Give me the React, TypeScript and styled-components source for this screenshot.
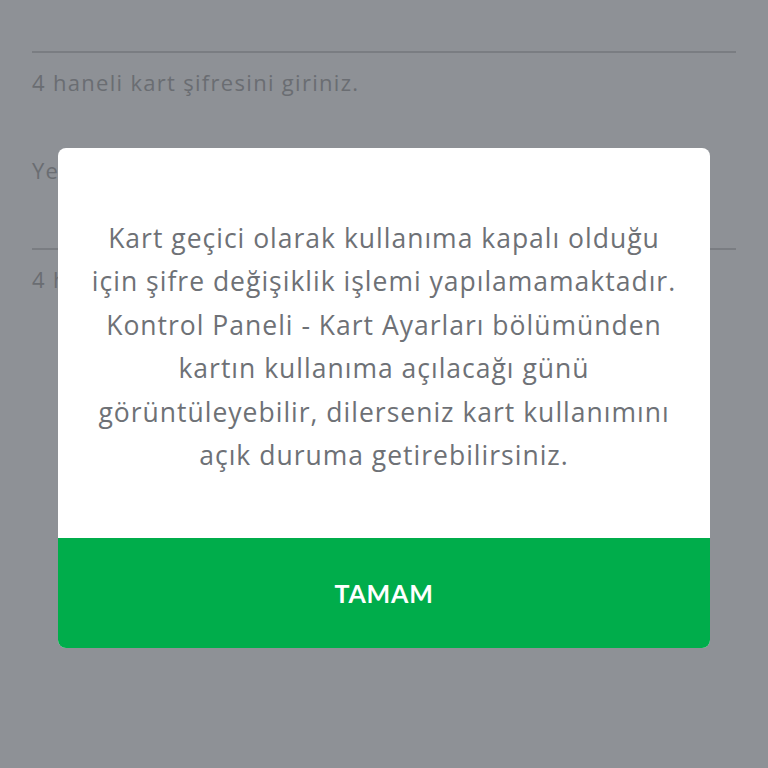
import React from "react";
import styled, { createGlobalStyle } from "styled-components";

const Global = createGlobalStyle`
  html, body { margin: 0; padding: 0; background: #8e9196; }
  body { font-family: "Open Sans", "Noto Sans", sans-serif; }
`;

const Page = styled.div`
  position: relative;
  width: 768px;
  height: 768px;
  overflow: hidden;
  background: #8e9196;
`;

const Form = styled.div`
  display: flex;
  flex-direction: column;
  padding: 0 32px;
`;

const Field = styled.div<{ $top: number; $height: number }>`
  display: flex;
  flex-direction: column;
  margin-top: ${(p) => p.$top}px;
  height: ${(p) => p.$height}px;
  border-bottom: 2px solid #7a7d82;
  justify-content: center;
`;

const Placeholder = styled.div`
  font-size: 22px;
  letter-spacing: 1.2px;
  color: #6a6d72;
  margin-top: -26px;
`;

const Hint = styled.div<{ $top: number }>`
  margin-top: ${(p) => p.$top}px;
  font-size: 22px;
  letter-spacing: 1.3px;
  color: #6a6d72;
  line-height: 30px;
`;

const Overlay = styled.div`
  position: absolute;
  inset: 0;
  display: flex;
  align-items: flex-start;
  justify-content: center;
  padding-top: 148px;
`;

const Dialog = styled.div`
  width: 652px;
  height: 500px;
  background: #ffffff;
  border-radius: 8px;
  overflow: hidden;
  display: flex;
  flex-direction: column;
`;

const Message = styled.div`
  height: 390px;
  box-sizing: border-box;
  padding: 69px 0 0;
  text-align: center;
  font-size: 26.5px;
  letter-spacing: 1px;
  line-height: 43.4px;
  color: #6e7176;
`;

const Button = styled.button`
  flex: 1;
  border: none;
  background: #00ad4b;
  color: #ffffff;
  font-family: Lato, "Noto Sans", sans-serif;
  font-weight: 700;
  font-size: 25px;
  letter-spacing: 0.8px;
  padding: 0;
  margin: 0;
`;

export default function App() {
  return (
    <Page>
      <Global />
      <Form>
        <Field $top={0} $height={51} />
        <Hint $top={14}>4 haneli kart şifresini giriniz.</Hint>
        <Field $top={20} $height={131}>
          <Placeholder>Yeni Şifre</Placeholder>
        </Field>
        <Hint $top={14}>4 haneli kart şifresini tekrar giriniz.</Hint>
      </Form>
      <Overlay>
        <Dialog>
          <Message>
            Kart geçici olarak kullanıma kapalı olduğu
            <br />
            için şifre değişiklik işlemi yapılamamaktadır.
            <br />
            Kontrol Paneli - Kart Ayarları bölümünden
            <br />
            kartın kullanıma açılacağı günü
            <br />
            görüntüleyebilir, dilerseniz kart kullanımını
            <br />
            açık duruma getirebilirsiniz.
          </Message>
          <Button>TAMAM</Button>
        </Dialog>
      </Overlay>
    </Page>
  );
}
